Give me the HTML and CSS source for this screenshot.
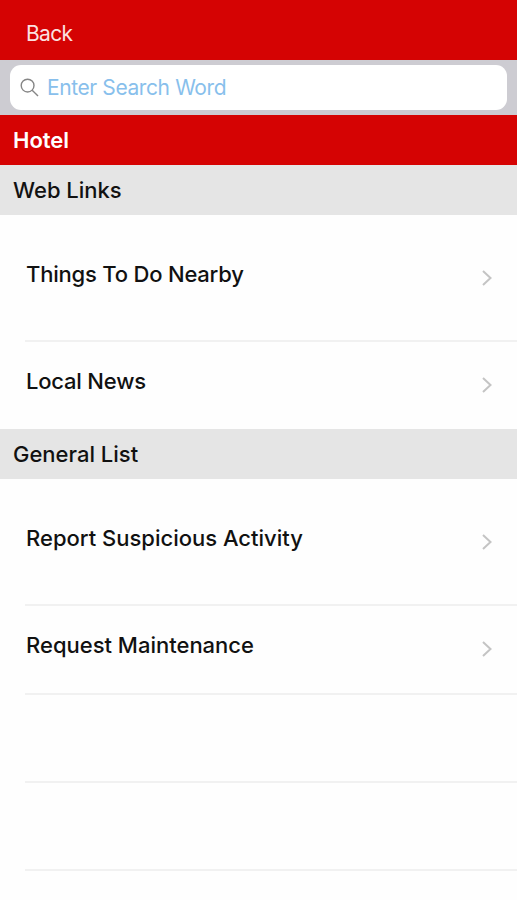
FILE: index.html
```html
<!DOCTYPE html>
<html lang="en">
<head>
    <meta charset="UTF-8">
    <title>Hotel</title>
    <meta name="viewport" content="width=device-width, initial-scale=1">
    <link rel="stylesheet" href="styles.css">
</head>
<body>
<header class="navbar">
    <a class="back">Back</a>
</header>
<div class="search">
    <label class="search-box">
        <svg class="search-icon" width="20" height="20" viewBox="0 0 20 20">
            <circle cx="7.6" cy="7.6" r="6.4"/>
            <path d="M12.2 12.2L18 18"/>
        </svg>
        <input class="search-input" type="text" placeholder="Enter Search Word">
    </label>
</div>
<h1 class="title">Hotel</h1>

<h2 class="section">Web Links</h2>
<ul class="list">
    <li class="row tall narrow">
        <span>Things To Do Nearby</span>
        <svg class="arrow" width="12" height="18" viewBox="0 0 12 18"><path d="M2 2L9.5 9L2 16"/></svg>
    </li>
    <li class="row last narrow">
        <span>Local News</span>
        <svg class="arrow" width="12" height="18" viewBox="0 0 12 18"><path d="M2 2L9.5 9L2 16"/></svg>
    </li>
</ul>

<h2 class="section">General List</h2>
<ul class="list">
    <li class="row tall">
        <span>Report Suspicious Activity</span>
        <svg class="arrow" width="12" height="18" viewBox="0 0 12 18"><path d="M2 2L9.5 9L2 16"/></svg>
    </li>
    <li class="row">
        <span>Request Maintenance</span>
        <svg class="arrow" width="12" height="18" viewBox="0 0 12 18"><path d="M2 2L9.5 9L2 16"/></svg>
    </li>
    <li class="row empty"></li>
    <li class="row empty"></li>
</ul>
</body>
</html>
```

FILE: styles.css
```css
* {
    box-sizing: border-box;
}

body {
    margin: 0;
    background-color: #fefefe;
    color: #111;
    font-family: Inter, "Liberation Sans", sans-serif;
    font-size: 22px;
    line-height: 28px;
}

.navbar {
    height: 60px;
    padding: 20px 26px 0;
    background-color: #d50303;
}

.back {
    display: block;
    color: #fbe0e0;
    font-size: 21px;
    letter-spacing: -0.7px;
}

.search {
    height: 55px;
    padding: 5px 10px;
    background-color: #cdccd2;
}

.search-box {
    display: flex;
    align-items: center;
    height: 45px;
    padding: 0 10px;
    border-radius: 11px;
    background-color: #fff;
}

.search-icon {
    flex: none;
    fill: none;
    stroke: #858585;
    stroke-width: 1.4;
}

.search-input {
    flex: 1;
    min-width: 0;
    margin-left: 7px;
    padding: 0;
    border: 0;
    outline: 0;
    background: none;
    font: inherit;
    font-size: 21px;
    letter-spacing: -0.4px;
}

.search-input::placeholder {
    color: #88bfec;
    opacity: 1;
}

.title,
.section {
    height: 50px;
    margin: 0;
    padding: 11px 13px 0;
    font-size: 22px;
}

.title {
    background-color: #d50303;
    color: #fff;
    font-weight: 600;
}

.section {
    background-color: #e5e5e5;
    font-weight: 500;
}

.list {
    margin: 0;
    padding: 0 0 0 25px;
    list-style: none;
}

.row {
    display: flex;
    align-items: center;
    justify-content: space-between;
    height: 89px;
    padding: 0 24px 9px 1px;
    border-bottom: 2px solid #f1f1f1;
    font-weight: 500;
}

.tall {
    height: 127px;
    padding-bottom: 8px;
}

.last {
    height: 87px;
    border-bottom: 0;
}

.narrow {
    letter-spacing: -0.2px;
}

.empty {
    height: 88px;
}

.arrow {
    flex: none;
    margin-top: 8px;
    fill: none;
    stroke: #c4c4c4;
    stroke-width: 2;
}
```
